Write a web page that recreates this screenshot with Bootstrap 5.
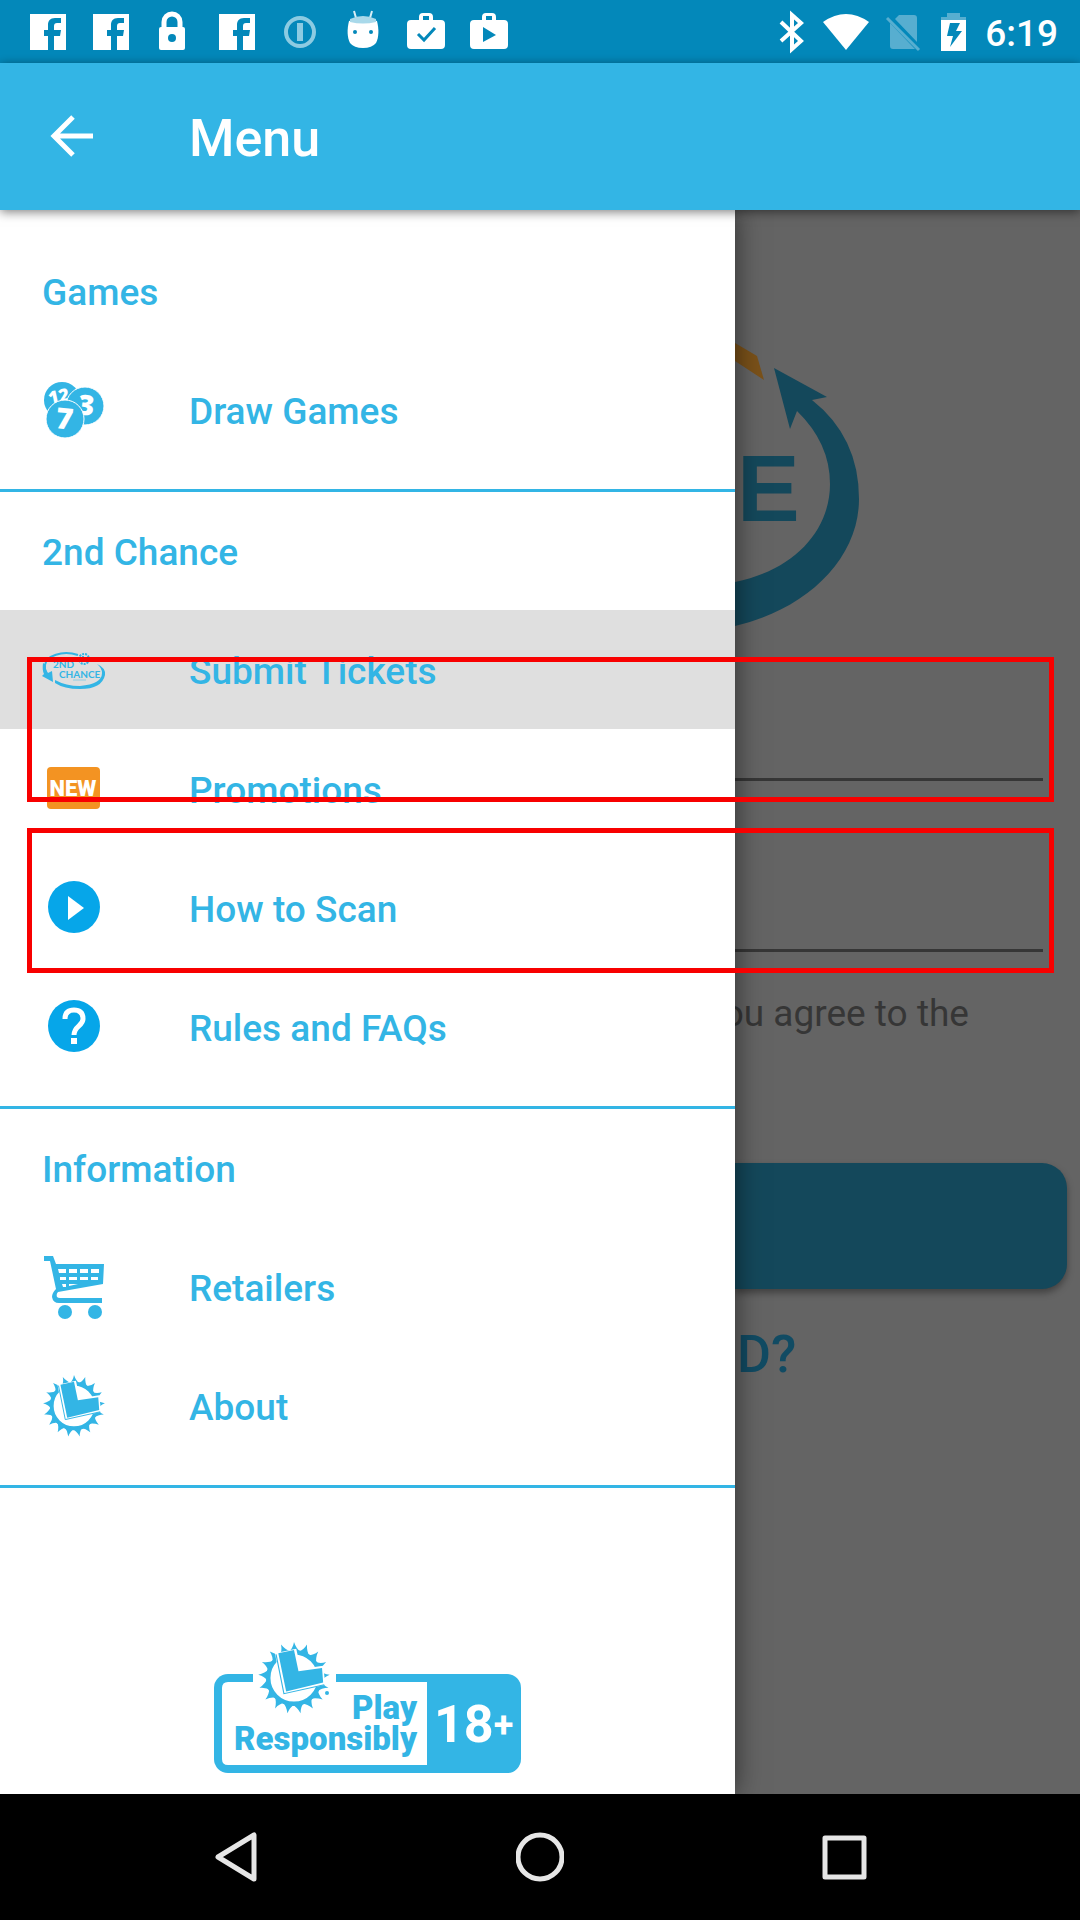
<!DOCTYPE html>
<html lang="en">
<head>
<meta charset="utf-8">
<meta name="viewport" content="width=device-width, initial-scale=1">
<title>Menu</title>
<link href="https://cdn.jsdelivr.net/npm/bootstrap@5.3.0/dist/css/bootstrap.min.css" rel="stylesheet">
<script src="https://cdn.jsdelivr.net/npm/bootstrap@5.3.0/dist/js/bootstrap.bundle.min.js"></script>
<style>
  :root { --sky: #33b5e5; --sky-dark: #0388ba; --dim: #646464; --dim-blue: #14485b; }
  body { font-family: Roboto, "Liberation Sans", sans-serif; font-size: 37px; background: #fff; }
  svg { display: block; flex: none; }
  button { line-height: 1; }
  .status { background: var(--sky-dark); height: 63px; padding: 0 22px 0 26px; }
  .status .notes { gap: 19px; }
  .status .signals { gap: 7px; }
  .clock { font-weight: 500; line-height: 44px; padding: 4px 0 0 2px; }
  .appbar { background: var(--sky); height: 147px; padding: 0 48px; gap: 93px; box-shadow: 0 2px 10px rgba(0,0,0,.5); z-index: 3; }
  .appbar h1 { font-size: 52px; font-weight: 500; line-height: 64px; padding-top: 4px; }
  .drawer { z-index: 1; box-shadow: 0 0 26px rgba(0,0,0,.55); padding-top: 22px; color: var(--sky); font-weight: 500; }
  .group { border-bottom: 3px solid var(--sky); padding-bottom: 20px; }
  .group h2 { font-size: inherit; font-weight: 500; line-height: 44px; height: 118px; padding: 4px 42px 0; }
  .entry { height: 119px; padding: 0 42px; gap: 83px; line-height: 44px; color: inherit; text-decoration: none; }
  .entry span { padding-top: 4px; }
  .entry.current { background: #dfdfdf; }
  .badge-18 { padding-bottom: 20px; }
  .behind { width: 345px; background: var(--dim); color: #363636; padding-top: 120px; overflow: hidden; }
  .field { height: 120px; border: 0; border-bottom: 3px solid #363636; border-radius: 0; background: transparent; margin: 31px 37px 0 0; }
  .field + .field { margin-top: 51px; }
  .terms { line-height: 44px; margin: 40px 111px 0 0; white-space: nowrap; }
  .submit { height: 126px; margin: 127px 13px 0 0; border: 0; border-radius: 0 25px 25px 0; background: var(--dim-blue); box-shadow: 0 4px 7px rgba(0,0,0,.35); }
  .forgot { font-size: 52px; font-weight: 500; line-height: 64px; margin: 34px 0 0 2px; color: #114b63; text-decoration: none; }
  .frame { left: 27px; right: 26px; height: 145px; border: 5px solid #f80000; z-index: 2; pointer-events: none; }
  .frame.first { top: 447px; }
  .frame.second { top: 618px; }
  .keys { height: 126px; gap: 256px; background: #000; }
</style>
</head>
<body class="d-flex flex-column min-vh-100">

<svg width="0" height="0" class="position-absolute" aria-hidden="true">
  <defs>
    <symbol id="fb" viewBox="0 0 44 44"><path fill="#fff" fill-rule="evenodd" d="M4 4h36v36H4zM22 40h6V26h6l1-6h-7v-4c0-2 1-3 3-3h4V8h-6c-5 0-7 3-7 7v5h-4v6h4z"/></symbol>
    <symbol id="case" viewBox="0 0 44 44"><path fill="#fff" fill-rule="evenodd" d="M15 10V7q0-4 4-4h6q4 0 4 4v3h8q4 0 4 4v21q0 4-4 4H7q-4 0-4-4V14q0-4 4-4zM19 10h6V6h-6z"/></symbol>
    <path id="ray" d="M-5-23Q-1-26 0-32Q2-26 6-23Z"/>
    <symbol id="sun" viewBox="-33 -33 66 66">
      <circle r="23" fill="#fff" stroke="#33b5e5" stroke-width="4"/>
      <g fill="#33b5e5">
        <use href="#ray"/><use href="#ray" transform="rotate(21.2)"/><use href="#ray" transform="rotate(42.4)"/><use href="#ray" transform="rotate(63.5)"/><use href="#ray" transform="rotate(84.7)"/><use href="#ray" transform="rotate(105.9)"/><use href="#ray" transform="rotate(127)"/><use href="#ray" transform="rotate(148.2)"/><use href="#ray" transform="rotate(169.4)"/><use href="#ray" transform="rotate(190.6)"/><use href="#ray" transform="rotate(211.8)"/><use href="#ray" transform="rotate(233)"/><use href="#ray" transform="rotate(254.1)"/><use href="#ray" transform="rotate(275.3)"/><use href="#ray" transform="rotate(296.5)"/><use href="#ray" transform="rotate(317.6)"/><use href="#ray" transform="rotate(338.8)"/>
      </g>
      <path d="M-17-22L2-26L6-8L26-11L28 6L-10 15Z" fill="#fff"/>
      <path d="M-16-21L-9 14L27 6" fill="none" stroke="#33b5e5" stroke-width="1"/>
      <path d="M-14-22L0-25L4-6L25-9L26 4L-7 12Z" fill="#33b5e5"/>
    </symbol>
  </defs>
</svg>

<div class="status d-flex align-items-center justify-content-between text-white">
  <div class="notes d-flex align-items-center">
    <svg width="44" height="44"><use href="#fb"/></svg>
    <svg width="44" height="44"><use href="#fb"/></svg>
    <svg width="44" height="44" viewBox="0 0 44 44"><path d="M12 18v-6a8 8 0 0 1 16 0v6" fill="none" stroke="#fff" stroke-width="5"/><rect x="7" y="17" width="26" height="23" rx="2" fill="#fff"/><circle cx="20" cy="28" r="4" fill="#0388ba"/></svg>
    <svg width="44" height="44"><use href="#fb"/></svg>
    <svg width="44" height="44" viewBox="0 0 44 44" fill="none" stroke="#8ccbe2"><circle cx="22" cy="22" r="14" stroke-width="4"/><path d="M22 13v18" stroke-width="6"/></svg>
    <svg width="44" height="44" viewBox="0 0 44 44"><path d="M13 1l2 7M31 1l-2 7" stroke="#d8eef6" stroke-width="2"/><path fill="#fff" d="M8 11q14-5 28 0c2 8 2 16-1 22q-4 5-13 5t-13-5C6 27 6 19 8 11z"/><path fill="#a9d9ea" d="M9 9q13-6 26 0v3q-13 3-26 0z"/><circle cx="14" cy="22" r="2" fill="#0388ba"/><circle cx="30" cy="22" r="2" fill="#0388ba"/></svg>
    <svg width="44" height="44" viewBox="0 0 44 44"><use href="#case"/><path d="M14 24l6 6 11-12" fill="none" stroke="#0388ba" stroke-width="3"/></svg>
    <svg width="44" height="44" viewBox="0 0 44 44"><use href="#case"/><path d="M16 17v15l13-7z" fill="#0388ba"/></svg>
  </div>
  <div class="signals d-flex align-items-center">
    <svg width="44" height="44" viewBox="0 0 44 44"><path d="M12 12l20 19-9 8V5l9 8-20 18" fill="none" stroke="#fff" stroke-width="4"/></svg>
    <svg width="52" height="44" viewBox="0 0 52 44"><path fill="#fff" d="M26 40L3 12q23-16 46 0z"/></svg>
    <svg width="46" height="44" viewBox="0 0 46 44"><path fill="#57aed0" d="M20 5h15q3 0 3 3v24L16 9zM11 13l25 26H14q-3 0-3-3z"/><path d="M8 8l32 32" stroke="#57aed0" stroke-width="3"/></svg>
    <svg width="44" height="44" viewBox="0 0 44 44"><path fill="#57aed0" d="M15 3h13v4h6v4H9V7h6z"/><path fill="#fff" fill-rule="evenodd" d="M9 10h25v31H9zM18 13l-3 13h6l-3 11 12-16h-6l4-8z"/></svg>
    <span class="clock">6:19</span>
  </div>
</div>

<header class="appbar d-flex align-items-center position-relative text-white">
  <button type="button" class="btn p-0 border-0" aria-label="Back">
    <svg width="48" height="48" viewBox="0 0 48 48" fill="none" stroke="#fff" stroke-width="5"><path d="M45 23H7M25 4L6 23l19 19"/></svg>
  </button>
  <h1 class="m-0">Menu</h1>
</header>

<main class="d-flex flex-grow-1 position-relative">
  <nav class="drawer bg-white flex-grow-1 d-flex flex-column" aria-label="Menu">
    <section class="group">
      <h2 class="m-0 d-flex align-items-center">Games</h2>
      <a href="#" class="entry d-flex align-items-center">
        <svg width="64" height="64" viewBox="0 0 64 64" font-family="Open Sans, sans-serif" font-weight="800" fill="#33b5e5">
          <circle cx="20" cy="22" r="18"/><text x="7" y="24" font-size="18" fill="#fff" transform="rotate(-12 20 22)">12</text>
          <circle cx="43" cy="28" r="19" stroke="#fff" stroke-width="1"/><text x="36" y="37" font-size="28" fill="#fff" transform="rotate(6 43 28)">3</text>
          <circle cx="23" cy="41" r="19" stroke="#fff" stroke-width="1"/><text x="14" y="51" font-size="29" fill="#fff" transform="rotate(6 23 41)">7</text>
        </svg>
        <span>Draw Games</span>
      </a>
    </section>
    <section class="group">
      <h2 class="m-0 d-flex align-items-center">2nd Chance</h2>
      <a href="#" class="entry current d-flex align-items-center" aria-current="page">
        <svg width="64" height="64" viewBox="0 0 64 64" font-family="Lato, sans-serif" font-weight="700" fill="#33b5e5">
          <path d="M36 17C20 12 4 18 3 27q-1 5 3 11" fill="none" stroke="#33b5e5" stroke-width="2"/>
          <path d="M1 25q-1 7 1 11l-2 2 11 6-1-11-4 2q-3-4-2-8z"/>
          <path d="M13 42Q24 48 38 48Q60 46 60 35Q60 30 55 26Q64 30 63 37Q60 51 38 51Q22 51 13 45Z"/>
          <circle cx="42" cy="21" r="5" fill="none" stroke="#33b5e5" stroke-width="2" stroke-dasharray="2 1"/><path d="M41 18v4h4" fill="none" stroke="#33b5e5" stroke-width="2"/>
          <text x="11" y="30" font-size="10">2ND</text><text x="17" y="40" font-size="10">CHANCE</text><path d="M31 42h13" stroke="#8fcde4" stroke-width="1"/>
        </svg>
        <span>Submit Tickets</span>
      </a>
      <a href="#" class="entry d-flex align-items-center">
        <svg width="64" height="64" viewBox="0 0 64 64"><rect x="5" y="10" width="53" height="42" rx="4" fill="#f39322"/><text x="31" y="39" text-anchor="middle" font-family="Roboto, sans-serif" font-weight="900" font-size="22" fill="#fff">NEW</text></svg>
        <span>Promotions</span>
      </a>
      <a href="#" class="entry d-flex align-items-center">
        <svg width="64" height="64" viewBox="0 0 64 64"><circle cx="32" cy="31" r="26" fill="#06a6e9"/><path d="M26 20v24l16-12z" fill="#fff"/></svg>
        <span>How to Scan</span>
      </a>
      <a href="#" class="entry d-flex align-items-center">
        <svg width="64" height="64" viewBox="0 0 64 64"><circle cx="32" cy="31" r="26" fill="#06a6e9"/><path d="M23 24q0-9 9-9t9 9c0 7-9 7-9 16" fill="none" stroke="#fff" stroke-width="5"/><path d="M29 43h6v6h-6z" fill="#fff"/></svg>
        <span>Rules and FAQs</span>
      </a>
    </section>
    <section class="group">
      <h2 class="m-0 d-flex align-items-center">Information</h2>
      <a href="#" class="entry d-flex align-items-center">
        <svg width="64" height="64" viewBox="0 0 64 64">
          <path fill="#33b5e5" d="M2 1h9l3 8h48l-1 20-45 8q-2 2-1 5 1 1 3 1h42v5H17q-6 0-7-6 0-4 4-8L8 6H2z"/>
          <g fill="#fff"><path d="M16 14h8v4h-7zM27 14h8v4h-8zM38 14h8v4h-8zM49 14h8v4h-8zM18 22h6v3h-6zM27 22h8v3h-8zM38 22h8v3h-8zM49 22h7v3h-7zM20 29h4v3h-3zM27 29h9l-9 2z"/></g>
          <g fill="#33b5e5"><circle cx="23" cy="57" r="7"/><circle cx="53" cy="57" r="7"/></g>
        </svg>
        <span>Retailers</span>
      </a>
      <a href="#" class="entry d-flex align-items-center">
        <svg width="64" height="64"><use href="#sun"/></svg>
        <span>About</span>
      </a>
    </section>
    <div class="badge-18 mt-auto d-flex justify-content-center">
      <svg width="307" height="134" viewBox="0 0 307 134" role="img" aria-label="Play Responsibly 18+" font-family="Roboto, sans-serif" fill="#33b5e5">
        <rect x="0" y="34" width="307" height="99" rx="14"/>
        <path d="M14 42H213V125H14Q8 125 8 119V48Q8 42 14 42Z" fill="#fff"/>
        <rect x="39" y="32" width="83" height="12" fill="#fff"/>
        <use href="#sun" x="43" y="1" width="74" height="74"/>
        <circle cx="113" cy="53" r="2"/>
        <g font-weight="900" font-size="33" text-anchor="end"><text x="203" y="79">Play</text><text x="203" y="110">Responsibly</text></g>
        <text x="220" y="102" font-weight="700" font-size="52" fill="#fff">18<tspan font-size="36" dy="-5">+</tspan></text>
      </svg>
    </div>
  </nav>

  <div class="behind d-flex flex-column flex-shrink-0">
    <svg width="345" height="300" viewBox="0 0 345 300">
      <path fill="#7a5119" d="M0 13L22 26L29 50L0 31Z"/>
      <path fill="#14485b" d="M39 38L92 67L77 70Q124 107 124 169C124 230 70 280 0 296V252C60 240 95 200 95 154Q95 113 62 81L55 99Z"/>
      <text x="2" y="191" font-family="Liberation Sans, Arial, sans-serif" font-weight="700" font-size="94" fill="#14485b">E</text>
    </svg>
    <input type="text" class="field" aria-label="Email">
    <input type="password" class="field" aria-label="Password">
    <p class="terms d-flex justify-content-end">ou agree to the</p>
    <button type="button" class="submit" aria-label="Sign in"></button>
    <a href="#" class="forgot">D?</a>
  </div>

  <div class="frame first position-absolute"></div>
  <div class="frame second position-absolute"></div>
</main>

<footer class="keys d-flex align-items-center justify-content-center">
  <button type="button" class="btn p-0 border-0" aria-label="Back"><svg width="48" height="50" viewBox="0 0 48 50"><path d="M42 3v44L6 25z" fill="none" stroke="#e6e6e6" stroke-width="5" stroke-linejoin="round"/></svg></button>
  <button type="button" class="btn p-0 border-0" aria-label="Home"><svg width="48" height="50" viewBox="0 0 48 50"><circle cx="24" cy="25" r="22" fill="none" stroke="#e6e6e6" stroke-width="5"/></svg></button>
  <button type="button" class="btn p-0 border-0" aria-label="Recent apps"><svg width="48" height="50" viewBox="0 0 48 50"><rect x="5" y="6" width="39" height="39" fill="none" stroke="#e6e6e6" stroke-width="5" stroke-linejoin="round"/></svg></button>
</footer>
</body>
</html>
